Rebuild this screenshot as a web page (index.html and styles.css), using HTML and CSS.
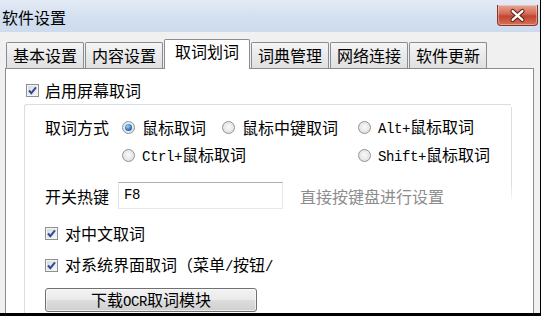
FILE: index.html
```html
<!DOCTYPE html>
<html lang="zh-CN">
<head>
    <meta charset="UTF-8">
    <title>软件设置</title>
    <link rel="stylesheet" href="styles.css">
</head>
<body>
    <div class="dialog">
        <div class="titlebar">
            <span class="title">软件设置</span>
            <button class="close">
                <svg width="40" height="19" viewBox="0 0 40 19">
                    <path d="M15 5l10 9M25 5l-10 9" stroke="#5b1f14" stroke-width="4.5" stroke-linecap="round"/>
                    <path d="M15 5l10 9M25 5l-10 9" stroke="#fff" stroke-width="2.4" stroke-linecap="round"/>
                </svg>
            </button>
        </div>

        <div class="tabs">
            <div class="tab">基本设置</div>
            <div class="tab">内容设置</div>
            <div class="tab active">取词划词</div>
            <div class="tab">词典管理</div>
            <div class="tab">网络连接</div>
            <div class="tab">软件更新</div>
        </div>

        <div class="panel">
            <div class="check first"><span class="box"></span><span>启用屏幕取词</span></div>

            <div class="group">
                <!-- 取词方式 -->
                <div class="mode">
                    <span class="label">取词方式</span>
                    <span class="radio on"><span class="dot"></span><span>鼠标取词</span></span>
                    <span class="radio"><span class="dot"></span><span>鼠标中键取词</span></span>
                    <span class="radio"><span class="dot"></span><span><span class="en">Alt+</span>鼠标取词</span></span>
                    <span class="radio col-a"><span class="dot"></span><span><span class="en">Ctrl+</span>鼠标取词</span></span>
                    <span class="radio col-c"><span class="dot"></span><span><span class="en">Shift+</span>鼠标取词</span></span>
                </div>

                <div class="hotkey">
                    <span class="label">开关热键</span>
                    <div class="input en">F8</div>
                    <span class="hint">直接按键盘进行设置</span>
                </div>

                <div class="check cn"><span class="box"></span><span>对中文取词</span></div>
                <div class="check ui"><span class="box"></span><span>对系统界面取词（菜单<span class="en">/</span>按钮<span class="en">/</span></span></div>

                <button class="btn">下载<span class="en">OCR</span>取词模块</button>
            </div>
        </div>
    </div>
</body>
</html>
```

FILE: styles.css
```css
:root {
    --face: #f0f0f0;
    --tab-border: #898c95;
    --group-border: #d5dfe5;
}

body {
    margin: 0;
    background: #000;
    width: 541px;
    height: 316px;
    overflow: hidden;
    font-family: "Noto Sans CJK SC", sans-serif;
    font-size: 16px;
    line-height: 20px;
    color: #000;
}

.en {
    font-family: "Liberation Mono", monospace;
    font-size: 14px;
    letter-spacing: -0.4px;
}

.dialog {
    width: 540px;
    height: 313px;
    background: var(--face);
    overflow: hidden;
    display: flex;
    flex-direction: column;
}

/* Titelleiste */
.titlebar {
    height: 32px;
    flex-shrink: 0;
    display: flex;
    justify-content: space-between;
    background: linear-gradient(#e3ebf5, #d2dfef 60%, #cddbed);
}

.title {
    padding: 7px 0 0 2px;
}

.close {
    margin: 5px 2px 0 0;
    width: 41px;
    height: 21px;
    padding: 0;
    border: 1px solid #8c3526;
    border-top: 0;
    border-radius: 0 0 4px 4px;
    background: linear-gradient(#e8a595, #d26a55 45%, #c2442d 55%, #d4705a);
    box-shadow: inset 0 0 0 1px rgba(255,255,255,0.35);
    display: flex;
    align-items: center;
    justify-content: center;
}

/* Reiter */
.tabs {
    display: flex;
    align-items: flex-end;
    height: 30px;
    margin: 7px 0 -1px 0;
    padding-left: 6px;
    position: relative;
    z-index: 1;
}

.tab {
    box-sizing: border-box;
    height: 26px;
    margin: 0 1px 1px 0;
    padding: 0 6px;
    line-height: 25px;
    border: 1px solid var(--tab-border);
    border-bottom: 0;
    border-radius: 2px 2px 0 0;
    background: linear-gradient(#f5f5f5, #e9e9e9 50%, #e0e0e0);
}

.tab.active {
    height: 30px;
    margin-bottom: 0;
    padding: 0 10px;
    line-height: 22px;
    background: #fff;
}

/* Inhalt */
.panel {
    margin-left: 5px;
    width: 529px;
    height: 260px;
    flex-shrink: 0;
    box-sizing: border-box;
    border: 1px solid var(--tab-border);
    background: #fff;
    padding: 11px 0 0 18px;
}

.check {
    display: flex;
    align-items: center;
    gap: 7px;
    height: 20px;
    white-space: nowrap;
}

.check.first {
    margin-left: 2px;
    gap: 6px;
}

.check.cn { margin-top: 14px; }
.check.ui { margin-top: 12px; }

.box {
    width: 13px;
    height: 13px;
    box-sizing: border-box;
    flex-shrink: 0;
    border: 1px solid #8e8f8f;
    box-shadow: inset 0 0 0 1px #f4f4f4;
    background:
        url("data:image/svg+xml,%3Csvg xmlns='http://www.w3.org/2000/svg' width='11' height='11'%3E%3Cpath d='M2 5.5l2.3 2.6L9 2.3' fill='none' stroke='%23334a91' stroke-width='2'/%3E%3C/svg%3E") center / 11px 11px no-repeat,
        linear-gradient(135deg, #d4d9e0, #f8f8f9);
}

.group {
    position: relative;
    margin-top: 4px;
    width: 488px;
    height: 240px;
    box-sizing: border-box;
    border: 1px solid var(--group-border);
    border-right-color: transparent;
    border-radius: 3px;
    padding: 10px 0 0 20px;
}

/* rechte Kante läuft nach unten aus */
.group::after {
    content: "";
    position: absolute;
    top: 2px;
    right: -1px;
    width: 1px;
    height: 96px;
    background: linear-gradient(var(--group-border) 80%, transparent);
}

.mode {
    display: grid;
    grid-template-columns: 77px 100px 136px auto;
    grid-auto-rows: 24px;
    row-gap: 4px;
    align-items: center;
}

.radio {
    display: flex;
    align-items: center;
    gap: 7px;
    white-space: nowrap;
}

.radio.col-a { grid-column: 2; }
.radio.col-c { grid-column: 4; }

.dot {
    width: 13px;
    height: 13px;
    flex-shrink: 0;
    box-sizing: border-box;
    border-radius: 50%;
    border: 1px solid #929292;
    background: radial-gradient(circle at 50% 45%, #fafafa, #d9d9d9);
    display: flex;
    align-items: center;
    justify-content: center;
}

.radio.on .dot::after {
    content: "";
    width: 7px;
    height: 7px;
    border-radius: 50%;
    background: radial-gradient(circle at 40% 35%, #9ad8ff, #2a78c4 55%, #164d8f);
}

.hotkey {
    margin-top: 15px;
    display: flex;
    align-items: center;
    height: 27px;
}

.hotkey .label {
    width: 73px;
}

.input {
    box-sizing: border-box;
    width: 165px;
    height: 27px;
    line-height: 25px;
    padding-left: 5px;
    border: 1px solid;
    border-color: #abadb3 #e3e9ef #e3e9ef #e2e3ea;
    margin-right: 17px;
}

.hint {
    color: #8d8d8d;
}

.btn {
    margin-top: 13px;
    width: 212px;
    height: 24px;
    padding: 0;
    font: inherit;
    color: #000;
    border: 1px solid #707070;
    border-radius: 3px;
    background: linear-gradient(#f2f2f2, #ebebeb 50%, #dddddd 51%, #cfcfcf);
    box-shadow: inset 0 0 0 1px rgba(255,255,255,0.6);
}
```
